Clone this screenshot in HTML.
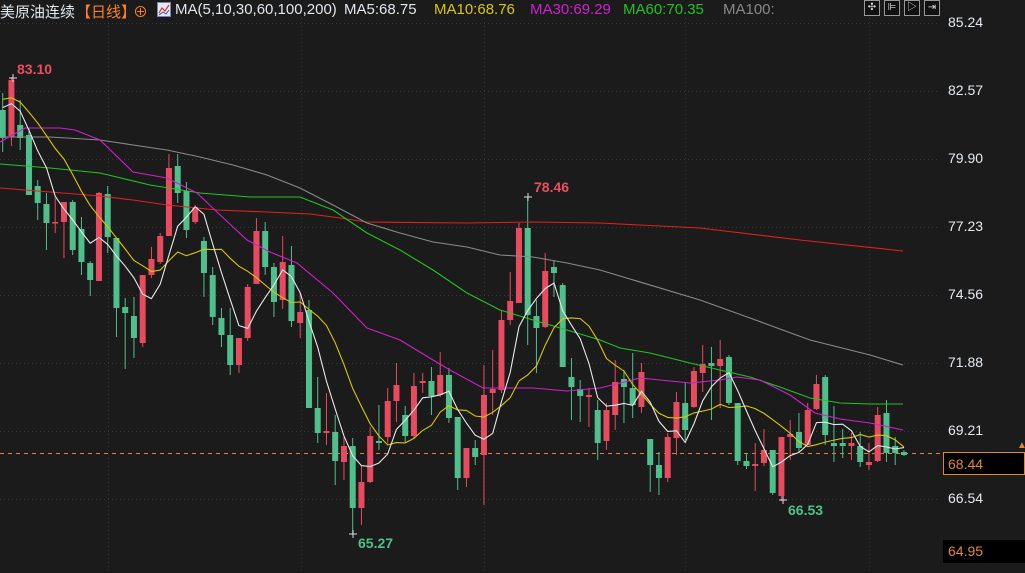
<!DOCTYPE html>
<html><head><meta charset="utf-8">
<style>
html,body{margin:0;padding:0;background:#1b1b1b;width:1025px;height:573px;overflow:hidden;font-family:"Liberation Sans","Noto Sans CJK SC",sans-serif;}
#wrap{position:relative;width:1025px;height:573px;}
.h{position:absolute;top:1px;font-size:15px;white-space:nowrap;color:#dfe6ee}
.ax{position:absolute;left:948px;font-size:14px;color:#e4e9f0}
.lbl{position:absolute;font-size:14px;font-weight:bold}
.btn{position:absolute;top:0;width:16px;height:16px;border:1px solid #999;background:#111;box-sizing:border-box;color:#ddd;font-size:10px;line-height:14px;text-align:center}
</style></head><body><div id="wrap">
<svg id="sv" width="1025" height="573" style="position:absolute;left:0;top:0"></svg>
<div class="h" style="left:0">美原油连续</div>
<div class="h" style="left:76px;color:#ff7f1e">【日线】</div>
<div class="h" style="left:133px;color:#ff7f1e">⊕</div>
<svg style="position:absolute;left:157px;top:2px" width="14" height="15"><rect x="0.5" y="0.5" width="13" height="14" fill="#e8e8f0" stroke="#7080c0"/><polyline points="2,11 5,6 8,9 12,3" fill="none" stroke="#e03030" stroke-width="1.2"/><polyline points="2,13 6,10 9,12 12,8" fill="none" stroke="#3050d0" stroke-width="1"/></svg>
<div class="h" style="left:175px">MA(5,10,30,60,100,200)</div>
<div class="h" style="left:344px">MA5:68.75</div>
<div class="h" style="left:434px;color:#d8c800">MA10:68.76</div>
<div class="h" style="left:530px;color:#d020d0">MA30:69.29</div>
<div class="h" style="left:623px;color:#22c322">MA60:70.35</div>
<div class="h" style="left:723px;color:#888">MA100:</div>
<div class="btn" style="left:864px">✣</div><div class="btn" style="left:884px">⊫</div><div class="btn" style="left:904px">▷</div><div class="btn" style="left:924px">⇥</div>
<div class="ax" style="top:14px">85.24</div>
<div class="ax" style="top:82px">82.57</div>
<div class="ax" style="top:150px">79.90</div>
<div class="ax" style="top:218px">77.23</div>
<div class="ax" style="top:286px">74.56</div>
<div class="ax" style="top:354px">71.88</div>
<div class="ax" style="top:422px">69.21</div>
<div class="ax" style="top:490px">66.54</div>
<div style="position:absolute;left:943px;top:452px;width:82px;height:23px;box-sizing:border-box;border:1px solid #e0892a;background:#000;color:#e0892a;font-size:14px;padding:3px 0 0 4px">68.44</div>
<div style="position:absolute;left:943px;top:540px;width:82px;height:23px;box-sizing:border-box;background:#000;color:#e0892a;font-size:14px;padding:3px 0 0 5px">64.95</div>
<div style="position:absolute;left:1017px;top:440px;color:#e0892a;font-size:10px">▲</div>
<div class="lbl" style="left:17px;top:61px;color:#e8505f">83.10</div>
<div class="lbl" style="left:534px;top:179px;color:#e8505f">78.46</div>
<div class="lbl" style="left:358px;top:535px;color:#4fc08d">65.27</div>
<div class="lbl" style="left:788px;top:502px;color:#4fc08d">66.53</div>
</div>
<script>
var C=[
['g',110,138,93,152],['r',80,137,77,146],['g',125,138,100,150],['g',135,195,128,195],['g',186,203,180,220],['g',204,223,193,250],['r',222,223,198,233],['r',202,222,202,258],['g',202,250,200,255],['g',229,262,217,275],
['g',263,280,261,296],['r',193,281,192,281],['g',194,237,186,253],['g',238,308,238,337],['g',307,313,298,369],['g',316,338,297,358],['r',275,343,275,347],['r',259,275,247,278],['r',236,262,233,264],['r',168,236,154,236],
['g',166,193,154,203],['g',191,230,182,238],['r',207,222,205,224],['g',241,273,237,297],['g',275,317,267,325],['g',318,335,308,347],['g',335,365,308,375],['r',338,365,338,373],['r',287,338,284,341],['r',231,284,218,284],
['g',231,267,222,275],['g',267,302,263,317],['r',262,300,236,309],['g',265,321,246,327],['r',312,323,293,338],['g',310,408,300,408],['g',408,433,377,443],['r',431,433,393,445],['g',432,461,415,485],['r',446,462,437,480],
['g',446,508,438,534],['r',482,508,465,525],['r',436,482,427,483],['g',441,443,405,450],['r',401,437,388,443],['r',385,401,363,422],['g',415,436,406,442],['r',386,436,373,438],['r',381,383,373,393],['g',381,396,367,415],
['r',375,395,352,397],['g',375,418,368,423],['g',417,478,417,490],['r',448,478,448,487],['g',448,457,440,465],['r',395,455,365,505],['r',389,393,350,415],['r',320,390,310,393],['r',301,320,272,325],['r',228,303,223,303],
['g',228,315,197,345],['g',316,328,300,373],['r',271,327,253,328],['g',267,273,260,297],['g',285,367,283,367],['g',377,387,358,420],['g',389,396,380,422],['r',395,397,388,427],['g',410,443,400,460],['r',410,441,403,450],
['r',382,415,360,430],['g',379,387,370,423],['g',388,405,353,418],['r',372,407,363,413],['g',439,465,439,492],['g',465,478,452,495],['r',437,478,433,482],['r',402,438,392,455],['g',403,430,382,440],['r',371,407,367,408],
['r',364,373,345,392],['g',363,366,347,420],['r',359,366,340,408],['g',357,403,355,405],['g',403,461,403,465],['g',461,466,453,469],['r',464,466,443,491],['r',450,463,429,466],['g',450,493,450,495],['r',437,496,437,501],
['r',434,437,420,460],['g',432,448,413,452],['r',410,445,403,445],['r',384,409,375,410],['g',377,435,375,445],['g',443,446,406,462],['g',443,446,429,458],['r',443,446,433,460],['g',446,462,432,467],['r',462,465,443,470],
['r',415,461,407,462],['g',413,453,400,462],['g',446,453,437,465],['g',452,455,450,456]];
var sv=document.getElementById('sv'),h='';
[23,91,159,227,295,363,431,499].forEach(function(y){h+='<line x1="0" x2="940" y1="'+(y+.5)+'" y2="'+(y+.5)+'" stroke="#3a3a3a" stroke-dasharray="1,3"/>';});
[108,301,484,685,869].forEach(function(x){h+='<line y1="18" y2="573" x1="'+(x+.5)+'" x2="'+(x+.5)+'" stroke="#333" stroke-dasharray="1,3"/>';});
h+='<line x1="0" x2="943" y1="453.5" y2="453.5" stroke="#d8862c" stroke-dasharray="4,4"/>';
var cl=[];
C.forEach(function(c,i){var x=2.7+i*8.75,col=c[0]=='g'?'#4fc08d':'#e84a5f';
 h+='<line x1="'+x+'" x2="'+x+'" y1="'+c[3]+'" y2="'+c[4]+'" stroke="'+col+'" stroke-width="1"/>';
 var bh=Math.max(1.5,c[2]-c[1]);h+='<rect x="'+(x-3)+'" y="'+c[1]+'" width="6" height="'+bh+'" fill="'+col+'"/>';
 cl.push(c[0]=='g'?c[2]:c[1]);});
function ma(n,pad){var p='';for(var i=0;i<cl.length;i++){var s=0;for(var k=0;k<n;k++){var j=i-k;s+=j>=0?cl[j]:pad;}p+=(2.7+i*8.75).toFixed(1)+','+(s/n).toFixed(1)+' ';}return p;}
function pl(pts,col){h+='<polyline points="'+pts+'" fill="none" stroke="'+col+'" stroke-width="1.1"/>';}
pl('0,188 50,192 100,196 133,200 167,205 217,210 267,212 310,214 333,217 367,222 467,223 533,222 600,223 700,228 800,240 903,251','#e02020');
pl('0,137 50,137 100,140 133,145 167,150 200,157 233,165 267,175 300,188 333,205 367,223 400,233 433,242 467,247 500,255 533,257 567,263 600,270 700,300 750,318 810,340 870,355 903,365','#8a8a8a');
pl('0,164 50,168 100,173 150,185 200,193 250,197 300,197 333,210 367,233 400,250 433,270 467,293 500,310 533,320 567,330 600,340 620,348 650,353 690,363 720,370 750,377 780,387 810,398 840,403 870,404 903,404','#22c322');
pl('0,142 25,128 60,128 75,130 100,140 133,172 167,178 197,193 217,212 247,240 270,252 297,263 333,293 367,328 400,340 433,360 450,370 483,388 533,388 567,391 600,388 620,383 640,378 660,380 690,383 720,380 737,377 760,380 790,395 815,413 840,419 870,423 903,430','#d020d0');
pl(ma(10,95),'#d8c800');
pl(ma(5,100),'#e8e8e8');
h+='<path d="M9 78h8M13 74v8M524 197h8M528 193v8M349 534h8M353 530v8M779 500h8M783 496v8" stroke="#ddd"/>';
sv.innerHTML=h;
</script>
</body></html>
